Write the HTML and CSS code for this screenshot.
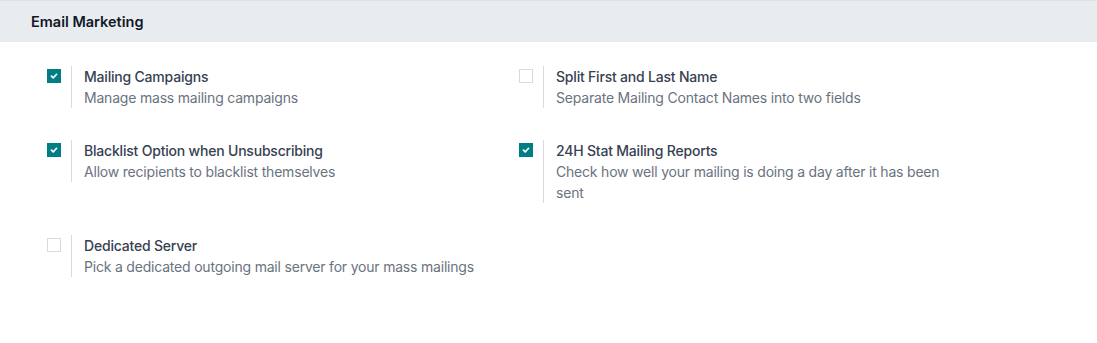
FILE: index.html
```html
<!DOCTYPE html>
<html lang="en">
<head>
<meta charset="utf-8">
<title>Email Marketing</title>
<link rel="stylesheet" href="styles.css">
</head>
<body>
<div class="section-header">Email Marketing</div>
<div class="settings">
  <div class="setting">
    <div class="check-col"><span class="checkbox checked"><svg viewBox="0 0 14 14"><path d="M4 7.2 L6.1 9.2 L10 5" /></svg></span></div>
    <div class="text-col">
      <div class="title">Mailing Campaigns</div>
      <div class="desc">Manage mass mailing campaigns</div>
    </div>
  </div>
  <div class="setting">
    <div class="check-col"><span class="checkbox"></span></div>
    <div class="text-col">
      <div class="title">Split First and Last Name</div>
      <div class="desc">Separate Mailing Contact Names into two fields</div>
    </div>
  </div>
  <div class="setting">
    <div class="check-col"><span class="checkbox checked"><svg viewBox="0 0 14 14"><path d="M4 7.2 L6.1 9.2 L10 5" /></svg></span></div>
    <div class="text-col">
      <div class="title">Blacklist Option when Unsubscribing</div>
      <div class="desc">Allow recipients to blacklist themselves</div>
    </div>
  </div>
  <div class="setting">
    <div class="check-col"><span class="checkbox checked"><svg viewBox="0 0 14 14"><path d="M4 7.2 L6.1 9.2 L10 5" /></svg></span></div>
    <div class="text-col">
      <div class="title">24H Stat Mailing Reports</div>
      <div class="desc">Check how well your mailing is doing a day after it has been sent</div>
    </div>
  </div>
  <div class="setting">
    <div class="check-col"><span class="checkbox"></span></div>
    <div class="text-col">
      <div class="title">Dedicated Server</div>
      <div class="desc">Pick a dedicated outgoing mail server for your mass mailings</div>
    </div>
  </div>
</div>
</body>
</html>
```

FILE: styles.css
```css
html, body {
  margin: 0;
  padding: 0;
  background: #ffffff;
  font-family: "Inter", "Roboto", "Liberation Sans", sans-serif;
  -webkit-font-smoothing: antialiased;
}

.section-header {
  box-sizing: border-box;
  height: 42px;
  display: flex;
  align-items: center;
  padding-left: 31px;
  padding-bottom: 1px;
  background: #e9ecef;
  border-top: 1px solid #dee2e6;
  font-size: 14.5px;
  font-weight: 600;
  color: #111827;
}

.settings {
  display: grid;
  grid-template-columns: 472px 472px;
  row-gap: 32px;
  padding: 24px 0 0 32px;
}

.setting {
  display: flex;
  align-items: flex-start;
}

.check-col {
  width: 39px;
  flex: none;
  box-sizing: border-box;
  padding: 3px 0 0 15px;
}

.checkbox {
  display: block;
  box-sizing: border-box;
  width: 14px;
  height: 14px;
  border: 1px solid #d8dadd;
  background: #ffffff;
}

.checkbox.checked {
  border-color: #017e84;
  background: #017e84;
}

.checkbox svg {
  display: block;
  width: 12px;
  height: 12px;
  margin: 0;
}

.checkbox svg path {
  fill: none;
  stroke: #ffffff;
  stroke-width: 2;
  stroke-linecap: round;
  stroke-linejoin: round;
}

.text-col {
  flex: 1;
  border-left: 1px solid #d8dadd;
  padding: 0 0 0 12px;
  font-size: 14px;
  line-height: 21px;
  letter-spacing: -0.2px;
  max-width: 400px;
}

.title {
  font-weight: 500;
  color: #374151;
}

.desc {
  color: #6b7280;
}
```
